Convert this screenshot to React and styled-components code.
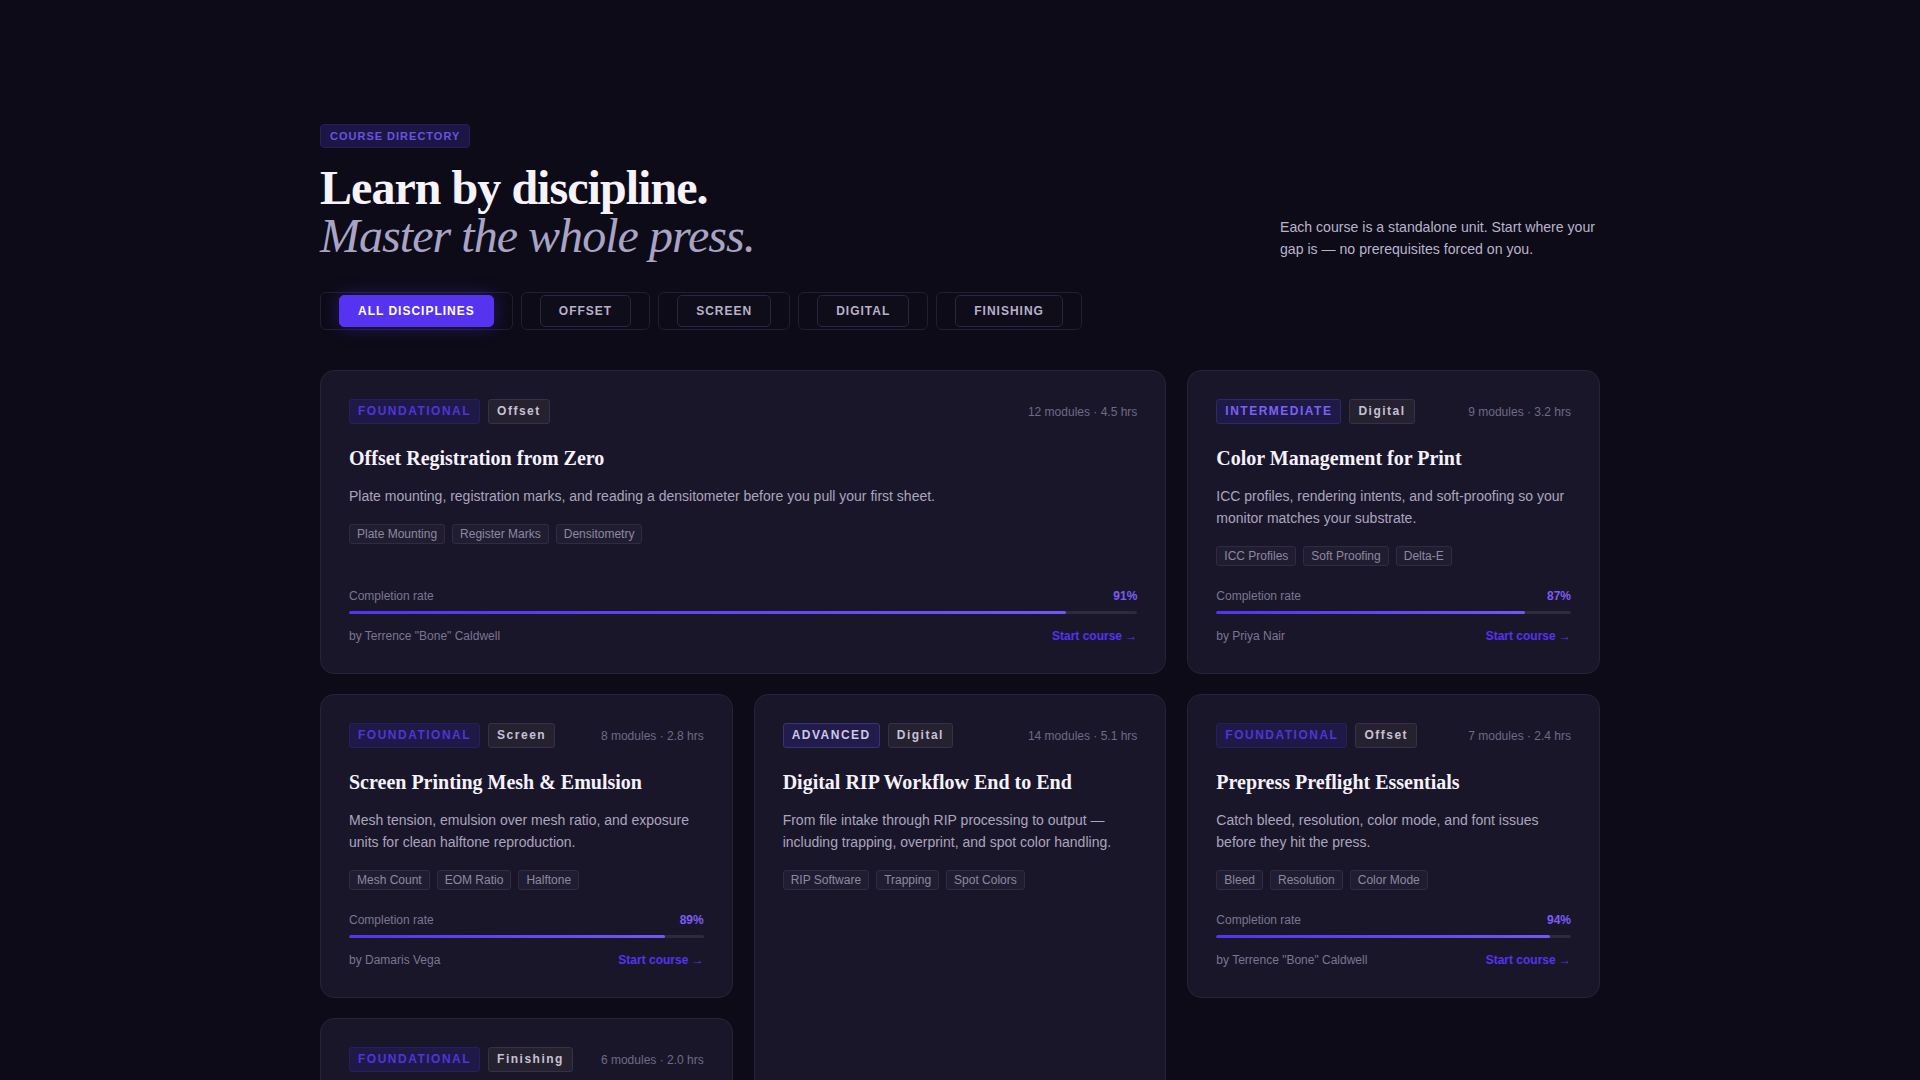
import React from 'react'
import styled, { createGlobalStyle } from 'styled-components'

const GlobalStyle = createGlobalStyle`
  html, body {
    margin: 0;
    padding: 0;
    background: #0d0b17;
  }
  body {
    font-family: "Liberation Sans", Arial, sans-serif;
    color: #e8e5f2;
  }
  * { box-sizing: border-box; }
`

const Page = styled.div`
  min-height: 100vh;
  padding: 124px 0 80px;
`

const Container = styled.div`
  width: 1280px;
  margin: 0 auto;
`

const Header = styled.header`
  display: flex;
  align-items: flex-end;
  justify-content: space-between;
`

const Eyebrow = styled.span`
  display: inline-block;
  height: 24px;
  line-height: 22px;
  padding: 0 9px;
  font-size: 11px;
  font-weight: 700;
  letter-spacing: 1px;
  color: #6a52e0;
  background: #1c1644;
  border: 1px solid #261f58;
  border-radius: 4px;
`

const Title = styled.h1`
  margin: 16px 0 0;
  font-family: "Liberation Serif", "Times New Roman", serif;
  font-size: 48px;
  line-height: 48px;
  font-weight: 700;
  letter-spacing: -0.02em;
  color: #f6f3fc;
`

const Sub = styled.em`
  display: block;
  font-weight: 400;
  font-style: italic;
  color: #a9a4c4;
`

const Intro = styled.p`
  margin: 0;
  width: 320px;
  font-size: 14.1px;
  line-height: 22px;
  color: #b9b4cc;
`

const Tabs = styled.nav`
  display: flex;
  gap: 8px;
  margin-top: 32px;
`

const TabSlot = styled.div`
  padding: 2px 18px;
  border: 1px solid #221e33;
  border-radius: 6px;
`

const Tab = styled.button`
  height: 32px;
  padding: 0 18px;
  font-family: "Liberation Sans", Arial, sans-serif;
  font-size: 12px;
  font-weight: 700;
  letter-spacing: 1px;
  border-radius: 5px;
  cursor: pointer;
  color: ${p => (p.$active ? '#ffffff' : '#b7b2ca')};
  background: ${p => (p.$active ? '#5533f0' : '#0f0d1a')};
  border: 1px solid ${p => (p.$active ? '#5533f0' : '#2a2640')};
  box-shadow: ${p => (p.$active ? '0 0 18px rgba(85, 51, 240, 0.35)' : 'none')};
`

const Grid = styled.div`
  display: grid;
  grid-template-columns: repeat(3, 1fr);
  gap: 20px 21px;
  margin-top: 40px;
`

const Card = styled.article`
  display: flex;
  flex-direction: column;
  padding: 28px 28px 30px;
  background: #1a162a;
  border: 1px solid #27223a;
  border-radius: 14px;
  grid-column: ${p => (p.$wide ? 'span 2' : 'auto')};
  grid-row: ${p => (p.$tall ? 'span 2' : 'auto')};
`

const TopRow = styled.div`
  display: flex;
  align-items: center;
  justify-content: space-between;
`

const Pills = styled.div`
  display: flex;
  gap: 8px;
`

const levelColors = {
  FOUNDATIONAL: { fg: '#4f35d8', bg: '#1e1946', bd: '#262058' },
  INTERMEDIATE: { fg: '#7b62f2', bg: '#1e1946', bd: '#2e2768' },
  ADVANCED: { fg: '#cdc8e4', bg: '#221c4c', bd: '#3a3372' },
}

const Level = styled.span`
  height: 25px;
  line-height: 23px;
  padding: 0 8px;
  font-size: 12px;
  font-weight: 700;
  letter-spacing: 1.5px;
  border-radius: 3px;
  color: ${p => levelColors[p.$level].fg};
  background: ${p => levelColors[p.$level].bg};
  border: 1px solid ${p => levelColors[p.$level].bd};
`

const Discipline = styled.span`
  height: 25px;
  line-height: 23px;
  padding: 0 8px;
  font-size: 12px;
  font-weight: 700;
  letter-spacing: 1.5px;
  border-radius: 3px;
  color: #c6c1d6;
  background: #25212f;
  border: 1px solid #36314a;
`

const Meta = styled.span`
  font-size: 12px;
  color: #6f6a85;
`

const CardTitle = styled.h2`
  margin: 21px 0 0;
  font-family: "Liberation Serif", "Times New Roman", serif;
  font-size: 20px;
  line-height: 26px;
  font-weight: 700;
  color: #f5f2fb;
`

const Desc = styled.p`
  margin: 14px 0 0;
  font-size: 14px;
  line-height: 22px;
  color: #aaa5bd;
`

const Tags = styled.div`
  display: flex;
  gap: 7px;
  margin-top: 17px;
`

const Tag = styled.span`
  height: 20px;
  line-height: 18px;
  padding: 0 7px;
  font-size: 12px;
  color: #8d88a2;
  background: #211d30;
  border: 1px solid #302b43;
  border-radius: 3px;
`

const Progress = styled.div`
  margin-top: auto;
  padding-top: 23px;
`

const Row = styled.div`
  display: flex;
  align-items: center;
  justify-content: space-between;
  font-size: 12px;
  line-height: 14px;
`

const Label = styled.span`
  color: #7a7590;
`

const Percent = styled.span`
  font-weight: 700;
  color: #7b5cf5;
`

const Track = styled.div`
  height: 3px;
  margin-top: 8px;
  background: #2e2a3e;
  border-radius: 2px;
  overflow: hidden;
`

const Fill = styled.div`
  height: 100%;
  background: linear-gradient(90deg, #5533f0, #7256f6);
  border-radius: 2px;
`

const Footer = styled(Row)`
  margin-top: 15px;
`

const Start = styled.a`
  font-weight: 700;
  color: #5533f0;
  text-decoration: none;
  cursor: pointer;
`

const filters = ['ALL DISCIPLINES', 'OFFSET', 'SCREEN', 'DIGITAL', 'FINISHING']

const courses = [
  {
    level: 'FOUNDATIONAL',
    discipline: 'Offset',
    meta: '12 modules · 4.5 hrs',
    title: 'Offset Registration from Zero',
    desc: 'Plate mounting, registration marks, and reading a densitometer before you pull your first sheet.',
    tags: ['Plate Mounting', 'Register Marks', 'Densitometry'],
    rate: 91,
    author: 'Terrence "Bone" Caldwell',
    wide: true,
  },
  {
    level: 'INTERMEDIATE',
    discipline: 'Digital',
    meta: '9 modules · 3.2 hrs',
    title: 'Color Management for Print',
    desc: 'ICC profiles, rendering intents, and soft-proofing so your monitor matches your substrate.',
    tags: ['ICC Profiles', 'Soft Proofing', 'Delta-E'],
    rate: 87,
    author: 'Priya Nair',
  },
  {
    level: 'FOUNDATIONAL',
    discipline: 'Screen',
    meta: '8 modules · 2.8 hrs',
    title: 'Screen Printing Mesh & Emulsion',
    desc: 'Mesh tension, emulsion over mesh ratio, and exposure units for clean halftone reproduction.',
    tags: ['Mesh Count', 'EOM Ratio', 'Halftone'],
    rate: 89,
    author: 'Damaris Vega',
  },
  {
    level: 'ADVANCED',
    discipline: 'Digital',
    meta: '14 modules · 5.1 hrs',
    title: 'Digital RIP Workflow End to End',
    desc: 'From file intake through RIP processing to output — including trapping, overprint, and spot color handling.',
    tags: ['RIP Software', 'Trapping', 'Spot Colors'],
    tall: true,
  },
  {
    level: 'FOUNDATIONAL',
    discipline: 'Offset',
    meta: '7 modules · 2.4 hrs',
    title: 'Prepress Preflight Essentials',
    desc: 'Catch bleed, resolution, color mode, and font issues before they hit the press.',
    tags: ['Bleed', 'Resolution', 'Color Mode'],
    rate: 94,
    author: 'Terrence "Bone" Caldwell',
  },
  {
    level: 'FOUNDATIONAL',
    discipline: 'Finishing',
    meta: '6 modules · 2.0 hrs',
    title: 'Folding, Trimming & Binding',
    desc: 'Grain direction, scoring, and saddle stitching for pieces that fold flat and trim true.',
    tags: ['Folding', 'Trimming', 'Binding'],
    rate: 85,
    author: 'Damaris Vega',
  },
]

const CourseCard = ({ c }) => (
  <Card $wide={c.wide} $tall={c.tall}>
    <TopRow>
      <Pills>
        <Level $level={c.level}>{c.level}</Level>
        <Discipline>{c.discipline}</Discipline>
      </Pills>
      <Meta>{c.meta}</Meta>
    </TopRow>
    <CardTitle>{c.title}</CardTitle>
    <Desc>{c.desc}</Desc>
    <Tags>
      {c.tags.map(t => (
        <Tag key={t}>{t}</Tag>
      ))}
    </Tags>
    {c.rate && (
      <Progress>
        <Row>
          <Label>Completion rate</Label>
          <Percent>{c.rate}%</Percent>
        </Row>
        <Track>
          <Fill style={{ width: `${c.rate}%` }} />
        </Track>
        <Footer>
          <Label>by {c.author}</Label>
          <Start>Start course →</Start>
        </Footer>
      </Progress>
    )}
  </Card>
)

const App = () => {
  return (
    <Page>
      <GlobalStyle />
      <Container>
        <Header>
          <div>
            <Eyebrow>COURSE DIRECTORY</Eyebrow>
            <Title>
              Learn by discipline.
              <Sub>Master the whole press.</Sub>
            </Title>
          </div>
          <Intro>
            Each course is a standalone unit. Start where your gap is — no prerequisites forced on you.
          </Intro>
        </Header>
        <Tabs>
          {filters.map((f, i) => (
            <TabSlot key={f}>
              <Tab $active={i === 0}>{f}</Tab>
            </TabSlot>
          ))}
        </Tabs>
        <Grid>
          {courses.map(c => (
            <CourseCard key={c.title} c={c} />
          ))}
        </Grid>
      </Container>
    </Page>
  )
}

export default App
